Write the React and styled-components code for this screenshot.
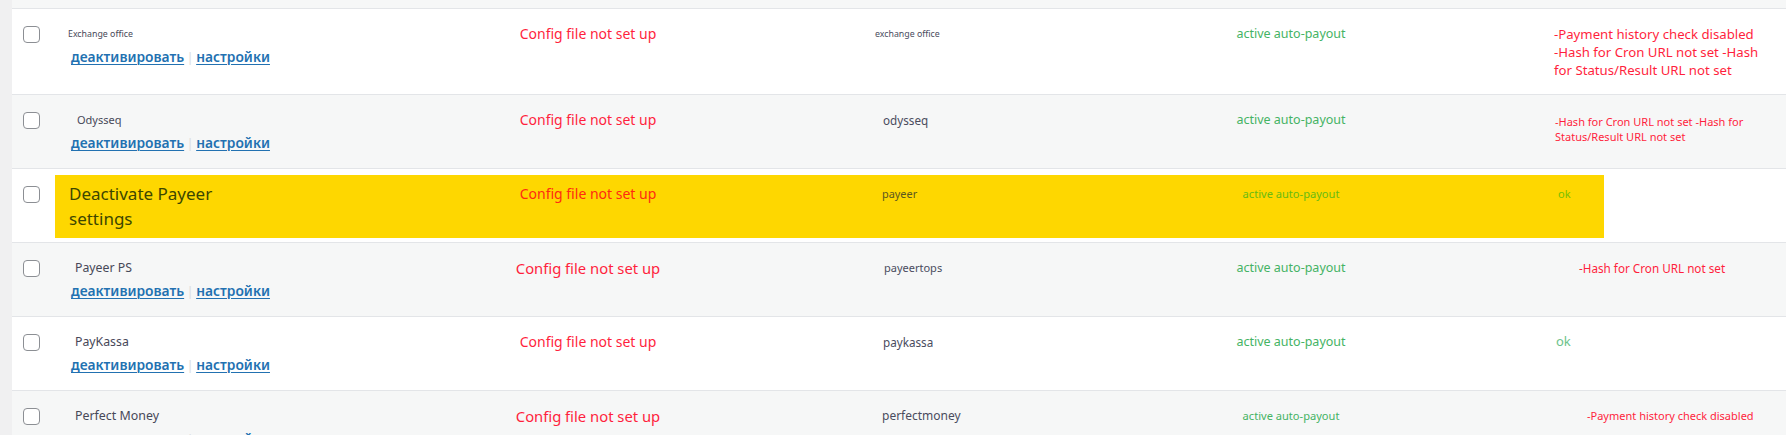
import React from "react";
import styled, { createGlobalStyle, css } from "styled-components";

const GlobalStyle = createGlobalStyle`
  html, body { margin: 0; padding: 0; background: #f0f0f1; }
  body { font-family: "Noto Sans", "Open Sans", sans-serif; overflow: hidden; }
  * { box-sizing: border-box; }
`;

const Page = styled.div`
  height: 435px;
  overflow: hidden;
  padding-left: 12px;
`;

const Table = styled.div`
  display: flex;
  flex-direction: column;
  background: #fff;
`;

const PrevRow = styled.div`
  height: 9px;
  background: #f6f7f7;
  border-bottom: 1px solid #e3e5e8;
`;

const Row = styled.div`
  display: grid;
  grid-template-columns: 43px 375px 316px 390px 310px 1fr;
  align-items: start;
  min-height: 74px;
  padding: 15px 0 15px;
  border-bottom: 1px solid #e3e5e8;
  background: ${(p) => (p.$alt ? "#f6f7f7" : "#ffffff")};
  ${(p) =>
    p.$highlight &&
    css`
      background: linear-gradient(#fed700, #fed700) 43px 6px / 1549px 63px no-repeat, #ffffff;
    `}
`;

const CheckCell = styled.div`
  padding-left: 11px;
`;

const CheckBox = styled.span`
  display: block;
  width: 17px;
  height: 17px;
  margin-top: 2px;
  border: 1px solid #8c8f94;
  border-radius: 4px;
  background: #fff;
`;

const NameCell = styled.div`
  padding-left: 16px;
  display: flex;
  flex-direction: column;
`;

const Name = styled.span`
  display: block;
  font-size: ${(p) => p.$size}px;
  line-height: 20px;
  color: #474858;
  margin-left: ${(p) => p.$shift}px;
`;

const BigName = styled.span`
  display: block;
  width: 180px;
  margin: -3px 0 -6px -2px;
  font-size: 17px;
  line-height: 25px;
  color: #3c4600;
`;

const Actions = styled.div`
  display: flex;
  align-items: center;
  margin-top: 3px;
  line-height: 20px;
  font-size: 13.8px;
`;

const ActionLink = styled.a`
  color: #2271b1;
  font-weight: 600;
  text-decoration: underline;
  text-underline-offset: 2px;
  text-decoration-thickness: 1px;
  cursor: pointer;
`;

const Sep = styled.span`
  width: 12px;
  text-align: center;
  color: #dcdcde;
  font-size: 13px;
`;

const ConfigCell = styled.div`
  text-align: center;
  font-size: ${(p) => p.$size}px;
  line-height: 20px;
  color: ${(p) => (p.$onYellow ? "#ff2a12" : "#ff1f3d")};
`;

const SlugCell = styled.div`
  padding-left: ${(p) => 136 + p.$shift}px;
  font-size: ${(p) => p.$size}px;
  line-height: 20px;
  color: ${(p) => (p.$onYellow ? "#5b5620" : "#4a4c5e")};
`;

const StatusCell = styled.div`
  text-align: center;
  font-size: ${(p) => p.$size}px;
  line-height: 20px;
  color: ${(p) => (p.$onYellow ? "#68bb12" : "#45b364")};
`;

const ResultCell = styled.div`
  padding-left: ${(p) => 108 + p.$shift}px;
`;

const ResultText = styled.div`
  width: ${(p) => p.$width}px;
  font-size: ${(p) => p.$size}px;
  line-height: ${(p) => p.$lh}px;
  margin-top: ${(p) => 10 - p.$lh / 2 + (p.$nudge || 0)}px;
  color: ${(p) => (p.$ok ? (p.$onYellow ? "#78c000" : "#6cc38b") : "#ff1f3d")};
`;

const NoBreak = styled.span`
  white-space: nowrap;
`;

const rows = [
  {
    name: "Exchange office",
    nameSize: 8.8,
    nameShift: -3,
    configSize: 14,
    slug: "exchange office",
    slugSize: 8.8,
    slugShift: -7,
    statusSize: 12.5,
    result: ["-Payment", "history", "check", "disabled", "-Hash", "for", "Cron", "URL", "not", "set", "-Hash", "for", "Status/Result", "URL", "not", "set"],
    resultSize: 13.2,
    resultLh: 18,
    resultWidth: 214,
    resultShift: 0,
  },
  {
    name: "Odysseq",
    nameSize: 11,
    nameShift: 6,
    configSize: 14,
    slug: "odysseq",
    slugSize: 11.7,
    slugShift: 1,
    statusSize: 12.5,
    result: ["-Hash", "for", "Cron", "URL", "not", "set", "-Hash", "for", "Status/Result", "URL", "not", "set"],
    resultSize: 11,
    resultLh: 15,
    resultWidth: 196,
    resultShift: 1,
    nudge: 1,
  },
  {
    highlight: true,
    bigName: "Deactivate Payeer settings",
    configSize: 14,
    slug: "payeer",
    slugSize: 10.9,
    slugShift: 0,
    statusSize: 11.1,
    result: ["ok"],
    ok: true,
    resultSize: 11,
    resultLh: 20,
    resultWidth: 60,
    resultShift: 4,
  },
  {
    name: "Payeer PS",
    nameSize: 12.3,
    nameShift: 4,
    configSize: 14.8,
    slug: "payeertops",
    slugSize: 11,
    slugShift: 2,
    statusSize: 12.5,
    result: ["-Hash", "for", "Cron", "URL", "not", "set"],
    resultSize: 11.7,
    resultLh: 20,
    resultWidth: 200,
    resultShift: 25,
  },
  {
    name: "PayKassa",
    nameSize: 12.3,
    nameShift: 4,
    configSize: 14,
    slug: "paykassa",
    slugSize: 11.7,
    slugShift: 1,
    statusSize: 12.5,
    result: ["ok"],
    ok: true,
    resultSize: 13,
    resultLh: 20,
    resultWidth: 60,
    resultShift: 2,
    nudge: -1,
  },
  {
    name: "Perfect Money",
    nameSize: 12.4,
    nameShift: 4,
    configSize: 14.8,
    slug: "perfectmoney",
    slugSize: 12,
    slugShift: 0,
    statusSize: 11.1,
    result: ["-Payment", "history", "check", "disabled"],
    resultSize: 11,
    resultLh: 20,
    resultWidth: 200,
    resultShift: 33,
  },
];

export default function App() {
  return (
    <>
      <GlobalStyle />
      <Page>
        <Table>
          <PrevRow />
          {rows.map((r, i) => (
            <Row key={i} $alt={i % 2 === 1} $highlight={r.highlight}>
              <CheckCell>
                <CheckBox />
              </CheckCell>
              <NameCell>
                {r.bigName ? (
                  <BigName>{r.bigName}</BigName>
                ) : (
                  <>
                    <Name $size={r.nameSize} $shift={r.nameShift}>
                      {r.name}
                    </Name>
                    <Actions>
                      <ActionLink>деактивировать</ActionLink>
                      <Sep>|</Sep>
                      <ActionLink>настройки</ActionLink>
                    </Actions>
                  </>
                )}
              </NameCell>
              <ConfigCell $size={r.configSize} $onYellow={r.highlight}>
                Config file not set up
              </ConfigCell>
              <SlugCell $size={r.slugSize} $shift={r.slugShift} $onYellow={r.highlight}>
                {r.slug}
              </SlugCell>
              <StatusCell $size={r.statusSize} $onYellow={r.highlight}>
                active auto-payout
              </StatusCell>
              <ResultCell $shift={r.resultShift}>
                <ResultText
                  $width={r.resultWidth}
                  $size={r.resultSize}
                  $lh={r.resultLh}
                  $nudge={r.nudge}
                  $ok={r.ok}
                  $onYellow={r.highlight}
                >
                  {r.result.map((w, k) => (
                    <React.Fragment key={k}>
                      {k > 0 ? " " : null}
                      <NoBreak>{w}</NoBreak>
                    </React.Fragment>
                  ))}
                </ResultText>
              </ResultCell>
            </Row>
          ))}
        </Table>
      </Page>
    </>
  );
}
